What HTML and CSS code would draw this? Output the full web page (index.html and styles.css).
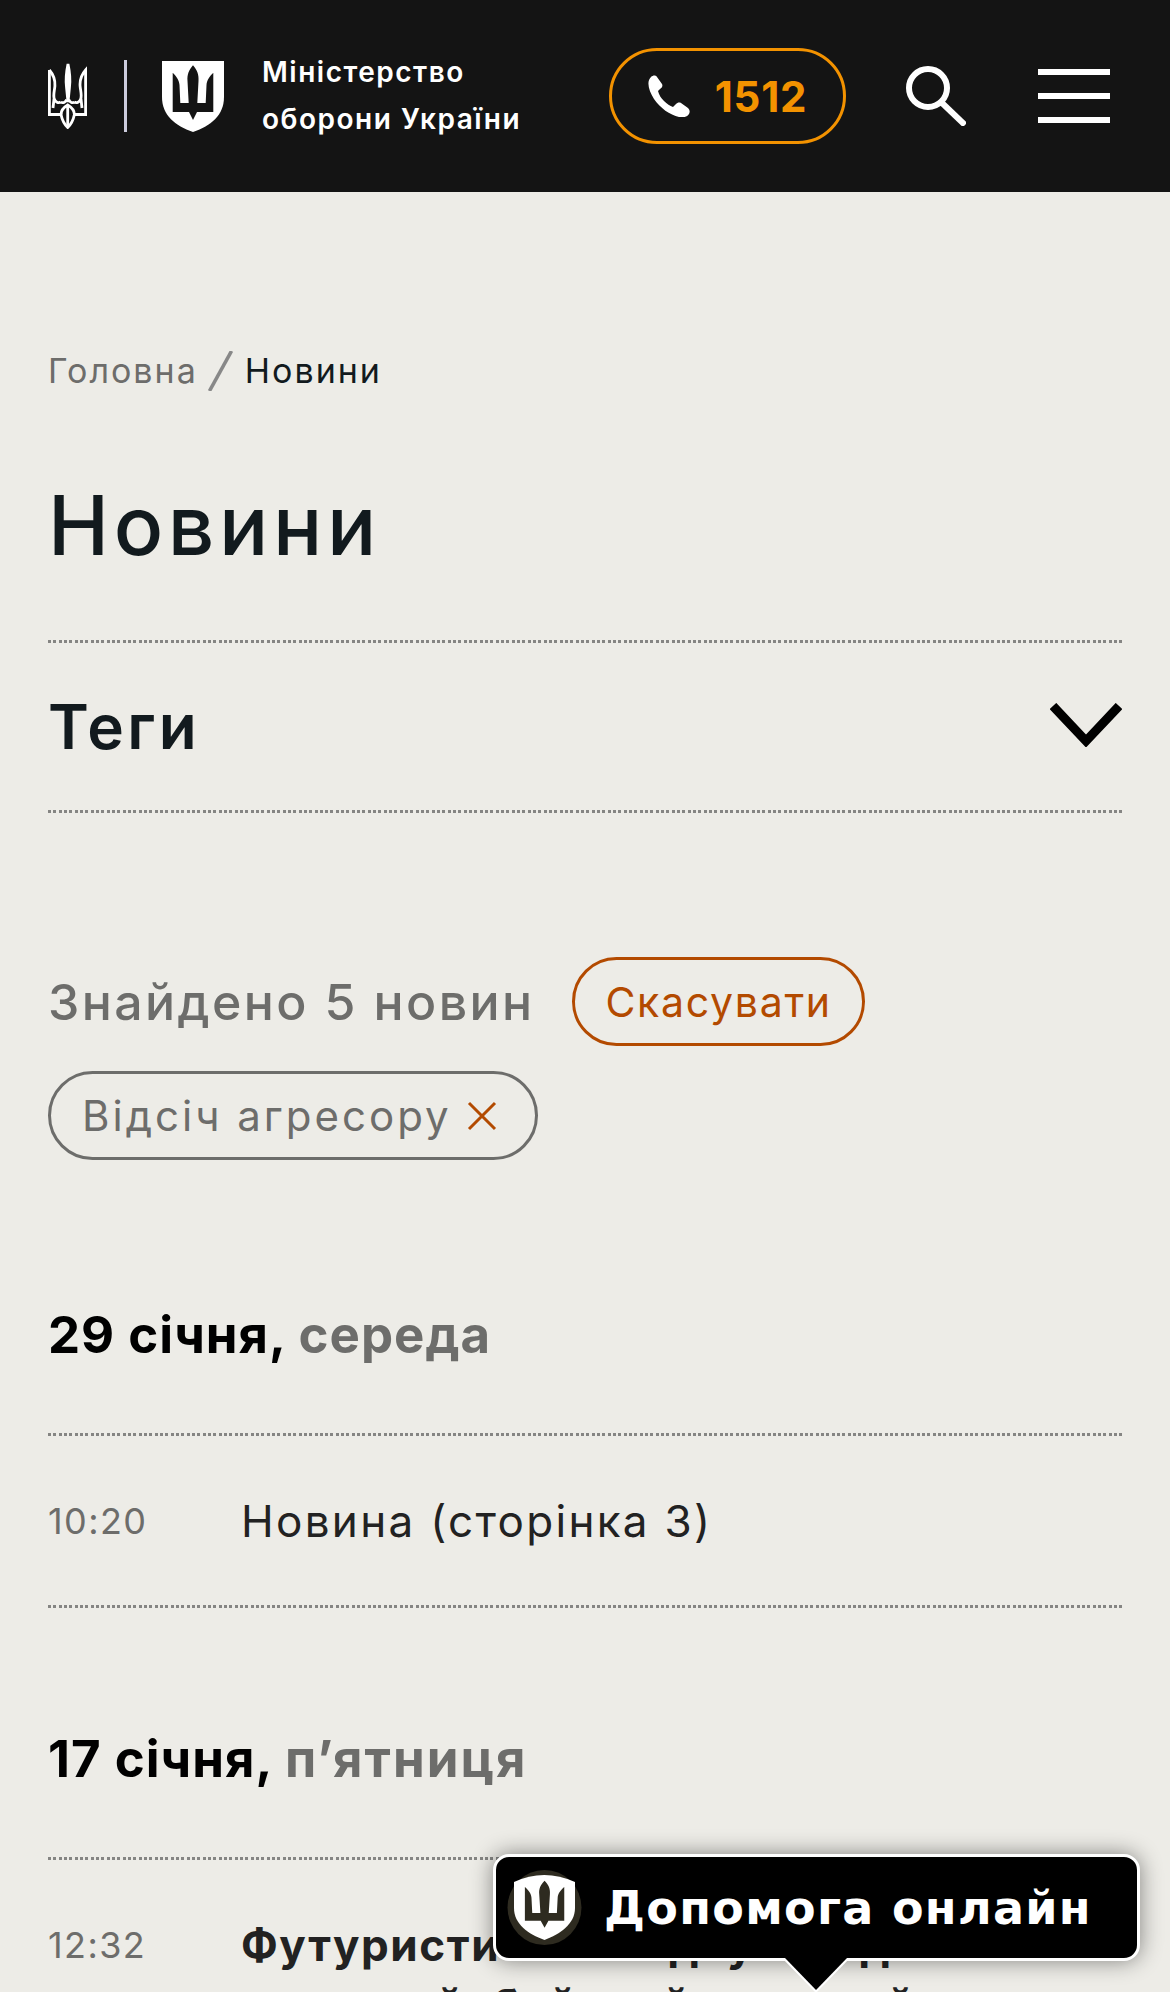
FILE: index.html
```html
<!DOCTYPE html>
<html lang="uk">
<head>
  <meta charset="UTF-8">
  <title>Новини</title>
  <meta name="viewport" content="width=device-width, initial-scale=1.0">
  <link rel="stylesheet" href="styles.css">
</head>
<body>

  <header class="top-bar">
    <div class="logos">
      <svg class="emblem" viewBox="0 0 39 66" fill="none" stroke="#fff" stroke-width="2.800">
        <path d="M20 1c-1.500 7-2.500 15-1.500 23 .5 5 1 10 1.500 15 .5-5 1-10 1.500-15 1-8 0-16-1.500-23z" fill="#fff"/>
        <path d="M1.400 7v44.500H13c1 5 3.500 10 6.700 13 3.200-3 5.700-8 6.700-13h11.200V7c-3.500 4-6 9-5.500 16 .4 5 2 9 .6 13-1 3-4 4.500-6.500 3"/>
        <path d="M1.400 7c3.500 4 6 9 5.500 16-.4 5-2 9-.6 13 1 3 4 4.500 6.500 3"/>
        <path d="M12.700 39c2 1.500 5 .5 6-2.500M26.700 39c-2 1.500-5 .5-6-2.500M13 51.500c0-4 2.500-7 6.700-9.500 4.200 2.500 6.700 5.500 6.700 9.500M6 36l-1 9M33 36l1 9M19.700 42v22"/>
      </svg>
      <span class="logo-line"></span>
      <svg class="shield" viewBox="0 0 62 71">
        <path d="M0 0h62v36c0 18-13 29-31 35C13 65 0 54 0 36z" fill="#fff"/>
        <path d="M31 4.300C27 9 25 13 25.500 20l1.200 22h-8.400l-.8-18c-.3-5-3.500-9-6.800-12.300V51H27l4 8 4-8h16.300V11.700c-3.300 3.300-6.500 7.300-6.800 12.300l-.8 18h-8.400l1.200-22C37 13 35 9 31 4.300z" fill="#141414"/>
      </svg>
      <div class="ministry">Міністерство<br>оборони України</div>
    </div>
    <a class="hotline">
      <svg class="phone" viewBox="0 0 42 42">
        <path d="M3 2c2-2 5-2 6 0l5 7c1 2 0 4-2 5l-2 2c1 4 3 7 6 10s6 5 9 6l3-3c1-1 3-2 5-1l7 5c2 2 2 4 1 6-2 3-6 4-10 3C22 40 12 33 6 24 1 16-2 7 3 2z" fill="#fff"/>
      </svg>
      <span>1512</span>
    </a>
    <svg class="search" viewBox="0 0 60 60" fill="none" stroke="#fff" stroke-width="6">
      <circle cx="22" cy="22" r="19"/>
      <path d="M35 36l24 23"/>
    </svg>
    <div class="burger"><span></span><span></span><span></span></div>
  </header>

  <main class="content">
    <nav class="crumbs">
      <span class="crumb-link">Головна</span>
      <svg class="crumb-sep" viewBox="0 0 25 40" fill="none" stroke="#888" stroke-width="3.500">
        <path d="M23.500 0L1.500 40"/>
      </svg>
      <span>Новини</span>
    </nav>

    <h1>Новини</h1>

    <div class="tags-row">
      <h2>Теги</h2>
      <svg class="chevron" viewBox="0 0 72 44" fill="none" stroke="#000" stroke-width="9">
        <path d="M3 3l33 35L69 3"/>
      </svg>
    </div>

    <div class="filters">
      <span class="found">Знайдено 5 новин</span>
      <span class="pill pill-cancel">Скасувати</span>
      <span class="pill pill-tag">Відсіч агресору
        <svg class="cross" viewBox="0 0 30 30" stroke="#b34a00" stroke-width="3"><path d="M2 2l26 26M28 2L2 28"/></svg>
      </span>
    </div>

    <section class="day">
      <h3>29 січня, <span>середа</span></h3>
      <div class="news-row">
        <span class="time">10:20</span>
        <span class="news-title">Новина (сторінка 3)</span>
      </div>
    </section>

    <section class="day day-next">
      <h3>17 січня, <span class="day-wide">п’ятниця</span></h3>
      <div class="news-row">
        <span class="time">12:32</span>
        <span class="news-title news-bold">Футуристичний підсумок дня:<br>сучасний, бойовий, великий</span>
      </div>
    </section>
  </main>

  <!-- floating help button -->
  <div class="help">
    <svg class="help-logo" viewBox="0 0 75 75">
      <ellipse cx="37.500" cy="37.500" rx="37" ry="37.500" fill="#2e2b20"/>
      <path d="M7 12Q37 -2 68 12V38C68 54 53 64 37.500 70 21 64 7 54 7 38z" fill="#fff"/>
      <g transform="translate(7.500 7) scale(.97 .86)">
        <path d="M31 4.300C27 9 25 13 25.500 20l1.200 22h-8.400l-.8-18c-.3-5-3.500-9-6.800-12.300V51H27l4 8 4-8h16.300V11.700c-3.300 3.300-6.500 7.300-6.800 12.300l-.8 18h-8.400l1.200-22C37 13 35 9 31 4.300z" fill="#2e2b20"/>
      </g>
    </svg>
    <span>Допомога онлайн</span>
  </div>

</body>
</html>
```

FILE: styles.css
```css
html, body {
  height: 1992px;
  overflow: hidden;
}
body {
  margin: 0;
  position: relative;
  font-family: Inter, "Noto Sans", sans-serif;
  background-color: #edece7;
  color: #121a1e;
}

.top-bar {
  height: 192px;
  background: #141414;
  display: flex;
  align-items: center;
  padding: 0 60px 0 48px;
}
.logos {
  display: flex;
  align-items: center;
  width: 561px;
}
.emblem {
  width: 39px;
  height: 66px;
}
.logo-line {
  width: 3px;
  height: 72px;
  background: #ccd;
  margin: 0 35px 0 37px;
}
.shield {
  width: 62px;
  height: 71px;
}
.ministry {
  margin-left: 38px;
  color: #fff;
  font-size: 28px;
  font-weight: 600;
  letter-spacing: 1.500px;
  line-height: 47px;
  white-space: nowrap;
}
.hotline {
  width: 231px;
  height: 90px;
  border: 3px solid #f39200;
  border-radius: 48px;
  display: flex;
  align-items: center;
  justify-content: center;
  gap: 25px;
  color: #f39200;
  font-size: 42px;
  font-weight: 700;
  letter-spacing: .8px;
}
.phone {
  width: 42px;
  height: 42px;
}
.search {
  width: 60px;
  height: 60px;
  margin-left: 60px;
}
.burger {
  margin-left: 72px;
  width: 72px;
  display: flex;
  flex-direction: column;
  gap: 18px;
}
.burger span {
  height: 6px;
  background: #fff;
}

.content {
  padding: 0 48px;
}
.crumbs {
  margin-top: 156px;
  font-size: 34px;
  letter-spacing: 2px;
  line-height: 46px;
  display: flex;
  align-items: center;
}
.crumb-link {
  color: #6d6d6b;
}
.crumb-sep {
  width: 25px;
  height: 40px;
  margin: 0 12px 0 10px;
}
h1 {
  margin: 82px 0 0;
  font-size: 82px;
  font-weight: 450;
  letter-spacing: 4.600px;
  line-height: 100px;
}
.tags-row {
  margin-top: 64px;
  height: 173px;
  box-sizing: border-box;
  background:
    repeating-linear-gradient(90deg, #858583 0 3px, transparent 3px 5.330px) top / 100% 3px no-repeat,
    repeating-linear-gradient(90deg, #858583 0 3px, transparent 3px 5.330px) bottom / 100% 3px no-repeat;
  display: flex;
  align-items: center;
  justify-content: space-between;
}
h2 {
  margin: 0;
  font-size: 62px;
  font-weight: 600;
  letter-spacing: 3.200px;
}
.chevron {
  width: 72px;
  height: 44px;
  margin-bottom: 4px;
}

.filters {
  margin-top: 144px;
  display: flex;
  flex-wrap: wrap;
  align-items: center;
  gap: 25px 38px;
}
.found {
  font-size: 50px;
  font-weight: 450;
  letter-spacing: 2.400px;
  color: #6d6d6b;
}
.pill {
  height: 89px;
  box-sizing: border-box;
  border: 3px solid;
  border-radius: 45px;
  display: flex;
  align-items: center;
  font-size: 41px;
  padding: 0 30px;
}
.pill-cancel {
  color: #b34a00;
  border-color: #b34a00;
  letter-spacing: 1.700px;
}
.pill-tag {
  color: #6d6d6b;
  border-color: #6d6d6b;
  gap: 15px;
  font-size: 42px;
  letter-spacing: 3px;
  padding: 0 38px 0 31px;
}
.cross {
  width: 30px;
  height: 30px;
}

.day {
  margin-top: 143px;
}
.day-next {
  margin-top: 119px;
}
h3 {
  margin: 0;
  height: 133px;
  box-sizing: border-box;
  font-size: 51px;
  font-weight: 650;
  letter-spacing: 1px;
  line-height: 63px;
  color: #000;
  background: repeating-linear-gradient(90deg, #858583 0 3px, transparent 3px 5.330px) bottom / 100% 3px no-repeat;
}
h3 span {
  color: #6d6d6b;
}
h3 .day-wide {
  letter-spacing: 2px;
}
.news-row {
  display: flex;
  padding: 55px 0 57px;
  background: repeating-linear-gradient(90deg, #858583 0 3px, transparent 3px 5.330px) bottom / 100% 3px no-repeat;
  align-items: flex-start;
}
.time {
  width: 193px;
  flex-shrink: 0;
  font-size: 36px;
  letter-spacing: 1.400px;
  line-height: 60px;
  color: #6d6d6b;
}
.news-title {
  font-size: 44px;
  letter-spacing: 2.300px;
  line-height: 60px;
  color: #222;
  white-space: nowrap;
}
.news-bold {
  font-weight: 700;
  letter-spacing: 1.600px;
}

.help {
  position: absolute;
  left: 493px;
  top: 1854px;
  width: 647px;
  height: 107px;
  box-sizing: border-box;
  background: #000;
  border: 3px solid #fff;
  border-radius: 16px;
  box-shadow: 0 0 22px rgba(0,0,0,.45);
  display: flex;
  align-items: center;
  color: #fff;
  font-family: "DejaVu Sans", sans-serif;
  font-weight: 700;
  font-size: 46px;
  letter-spacing: 1.300px;
}
.help::before,
.help::after {
  content: "";
  position: absolute;
  top: 100%;
}
.help::before {
  left: 286px;
  border-left: 34px solid transparent;
  border-right: 34px solid transparent;
  border-top: 35px solid #fff;
}
.help::after {
  left: 289px;
  border-left: 31px solid transparent;
  border-right: 31px solid transparent;
  border-top: 32px solid #000;
}
.help-logo {
  width: 75px;
  height: 75px;
  margin: 0 22px 0 11px;
}
```
